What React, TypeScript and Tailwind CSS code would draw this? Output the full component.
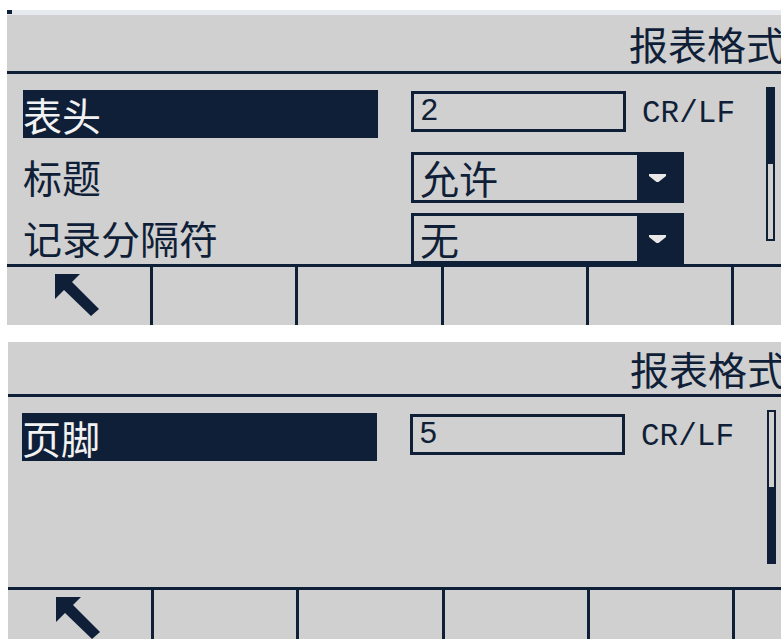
import type { ReactNode } from "react";

// two captures of the same terminal menu page, stacked on a white sheet

function ArrowIcon() {
  return (
    <svg width="44" height="42" viewBox="0 0 44 42" className="block">
      <polygon points="0,0 25,0 17,8 44,35 36,42 9,16 0,25" fill="#101f38" />
    </svg>
  );
}

function Label({ text, selected }: { text: string; selected?: boolean }) {
  return (
    <div
      className={`w-[355px] h-[48px] flex items-center shrink-0 text-[39px] leading-none font-['Noto_Sans_CJK_SC',sans-serif] ${
        selected ? "bg-[#101f38] text-[#f2f2f2]" : "text-[#101f38]"
      }`}
    >
      {text}
    </div>
  );
}

function NumberBox({ value, className }: { value: string; className: string }) {
  return (
    <div className={`flex items-start ${className}`}>
      <div className="w-[215px] h-[41px] border-[3px] border-[#101f38] flex items-center pl-[6px] text-[31px] leading-none text-[#101f38] font-['Liberation_Mono',monospace]">
        {value}
      </div>
      <div className="ml-[16px] mt-[7px] text-[31px] leading-none text-[#101f38] font-['Liberation_Mono',monospace]">
        CR/LF
      </div>
    </div>
  );
}

function Dropdown({ value }: { value: string }) {
  return (
    <div className="ml-[33px] w-[273px] h-[51px] border-[3px] border-[#101f38] flex">
      <div className="flex-1 flex items-center pl-[6px] text-[39px] leading-none text-[#101f38] font-['Noto_Sans_CJK_SC',sans-serif]">
        {value}
      </div>
      <div className="w-[44px] bg-[#101f38] flex items-center justify-center pr-[4px]">
        <svg width="17" height="8" viewBox="0 0 17 8" className="block">
          <polygon points="0,0 17,0 17,2 9.5,8 7.5,8 0,2" fill="#e8e8e8" />
        </svg>
      </div>
    </div>
  );
}

function ScrollBar({ at }: { at: "top" | "bottom" }) {
  return (
    <div className="mt-[13px] w-[9px] h-[154px] border-2 border-[#101f38] flex flex-col shrink-0">
      {at === "top" ? <div className="h-[75px] bg-[#101f38]" /> : <div className="h-[75px]" />}
      {at === "bottom" && <div className="flex-1 bg-[#101f38]" />}
    </div>
  );
}

function SoftKeys() {
  return (
    <div className="h-[58px] flex shrink-0">
      <div className="w-[143px] flex items-center justify-center pb-[2px] pr-[3px]">
        <ArrowIcon />
      </div>
      <div className="w-[145px] border-l-[3px] border-[#101f38]" />
      <div className="w-[146px] border-l-[3px] border-[#101f38]" />
      <div className="w-[145px] border-l-[3px] border-[#101f38]" />
      <div className="w-[145px] border-l-[3px] border-[#101f38]" />
      <div className="flex-1 border-l-[3px] border-[#101f38]" />
    </div>
  );
}

function Screen({
  children,
  scroll,
  className,
  headerHeight,
}: {
  children: ReactNode;
  scroll: "top" | "bottom";
  className: string;
  headerHeight: string;
}) {
  return (
    <div className={`w-[785px] h-[310px] bg-[#d0d0d0] flex flex-col overflow-hidden shrink-0 ${className}`}>
      <div
        className={`${headerHeight} flex items-center justify-end pr-[7px] text-[39px] leading-none text-[#101f38] font-['Noto_Sans_CJK_SC',sans-serif] shrink-0`}
      >
        报表格式
      </div>
      <div className="h-[3px] bg-[#101f38] shrink-0" />
      <div className="h-[190px] flex overflow-hidden shrink-0">
        <div className="flex-1 pl-[16px] pt-[16px] flex flex-col">{children}</div>
        <div className="mr-[17px]">
          <ScrollBar at={scroll} />
        </div>
      </div>
      <div className="h-[3px] bg-[#101f38] shrink-0" />
      <SoftKeys />
    </div>
  );
}

export default function App() {
  return (
    <div className="w-[781px] h-[639px] overflow-hidden bg-white flex flex-col">
      <div className="h-[10px] shrink-0" />
      <div className="ml-[7px] h-[5px] bg-[#e6e9ee] flex shrink-0">
        <div className="w-[5px] h-[4px] bg-[#101f38]" />
      </div>

      <Screen className="ml-[7px]" scroll="top" headerHeight="h-[56px]">
        <div className="h-[62px] flex items-start shrink-0">
          <Label text="表头" selected />
          <NumberBox value="2" className="ml-[33px] mt-[1px]" />
        </div>
        <div className="h-[61px] flex items-start shrink-0">
          <Label text="标题" />
          <Dropdown value="允许" />
        </div>
        <div className="h-[61px] flex items-start shrink-0">
          <Label text="记录分隔符" />
          <Dropdown value="无" />
        </div>
      </Screen>

      <div className="h-[17px] shrink-0" />

      <Screen className="ml-[8px]" scroll="bottom" headerHeight="h-[52px]">
        <div className="h-[62px] flex items-start shrink-0 -ml-[2px]">
          <Label text="页脚" selected />
          <NumberBox value="5" className="ml-[33px] mt-[1px]" />
        </div>
      </Screen>
    </div>
  );
}
